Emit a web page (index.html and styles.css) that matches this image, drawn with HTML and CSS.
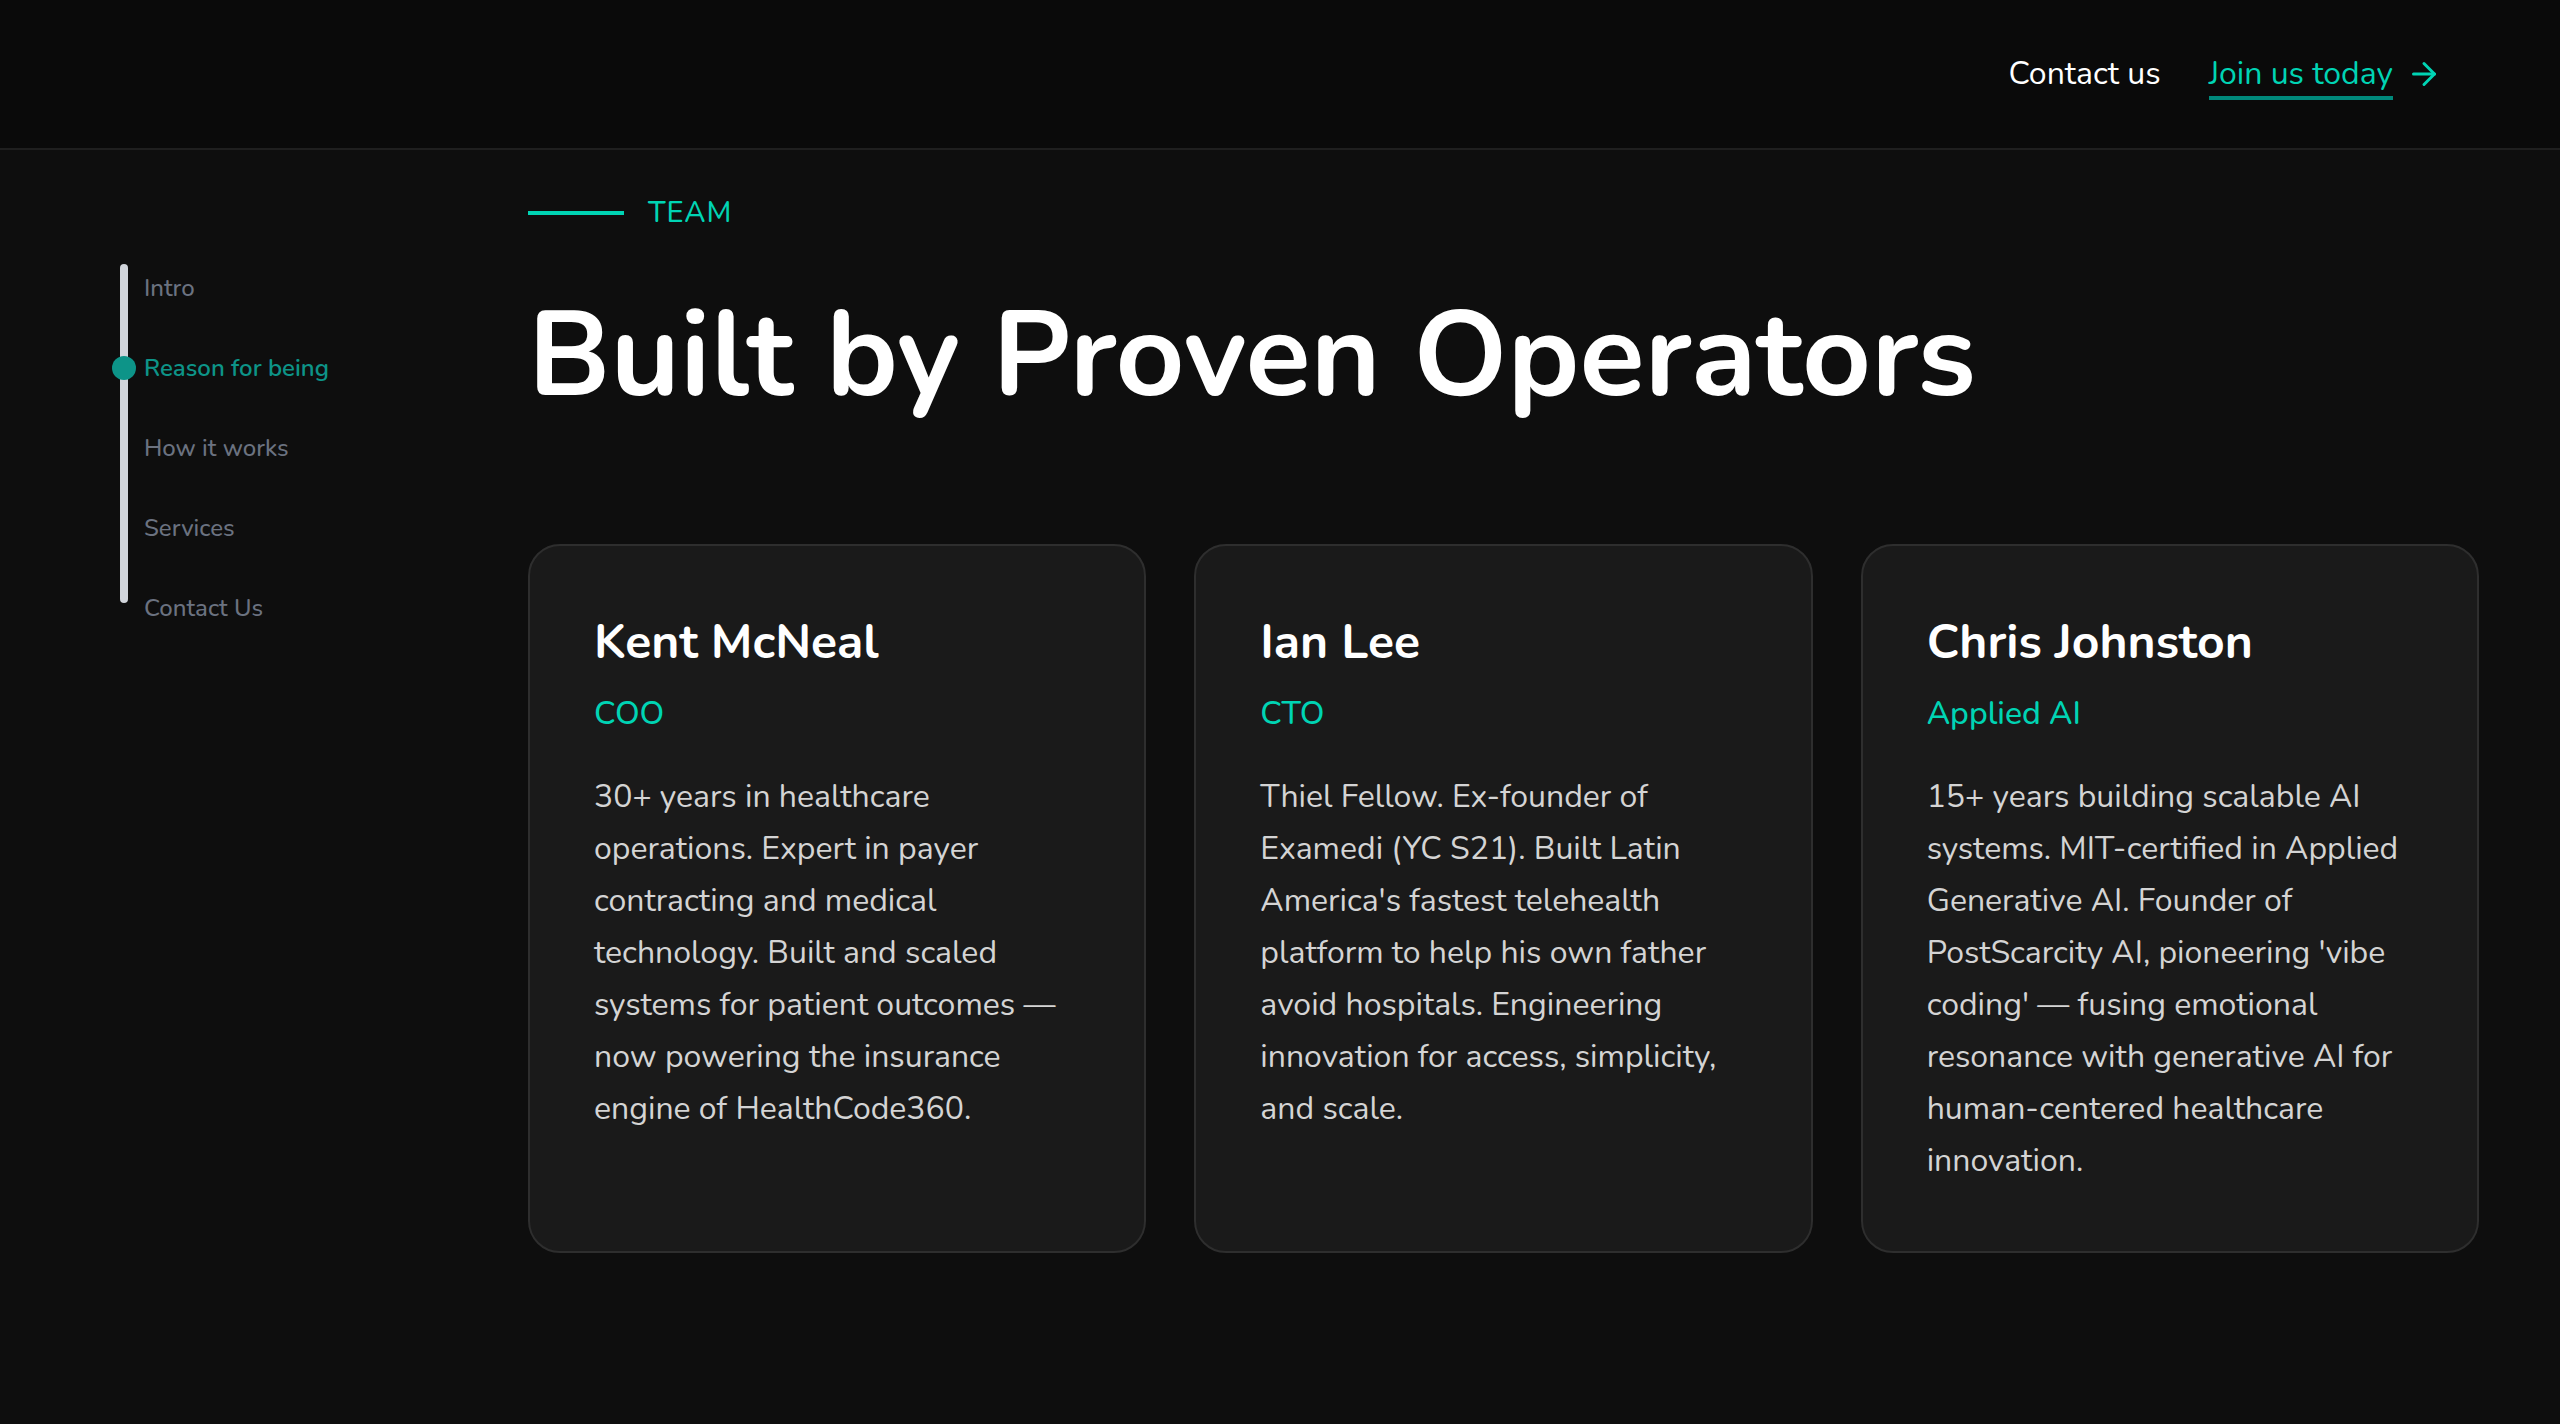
FILE: index.html
```html
<!DOCTYPE html>
<html lang="en">
<head>
<meta charset="utf-8">
<title>Team — Built by Proven Operators</title>
<link rel="stylesheet" href="styles.css">
</head>
<body>
<header class="topbar">
  <nav class="topnav">
    <a class="topnav-link" href="#contact">Contact us</a>
    <a class="topnav-cta" href="#join">
      <span class="topnav-cta-text">Join us today</span>
      <svg class="topnav-arrow" viewBox="0 0 24 24" width="36" height="36" fill="none" stroke="currentColor" stroke-width="2" stroke-linecap="round" stroke-linejoin="round" aria-hidden="true"><path d="M5 12h14"/><path d="M12 5l7 7-7 7"/></svg>
    </a>
  </nav>
</header>
<div class="layout">
  <aside class="sidenav">
    <div class="sidenav-track"><span class="sidenav-dot"></span></div>
    <ul class="sidenav-list">
      <li class="sidenav-item">Intro</li>
      <li class="sidenav-item is-active">Reason for being</li>
      <li class="sidenav-item">How it works</li>
      <li class="sidenav-item">Services</li>
      <li class="sidenav-item">Contact Us</li>
    </ul>
  </aside>
  <main class="content">
    <div class="eyebrow"><span class="eyebrow-line"></span><span class="eyebrow-text">TEAM</span></div>
    <h1 class="headline">Built by Proven Operators</h1>
    <div class="cards">
      <article class="card">
        <h2 class="card-name">Kent McNeal</h2>
        <p class="card-role">COO</p>
        <p class="card-bio">30+ years in healthcare operations. Expert in payer contracting and medical technology. Built and scaled systems for patient outcomes — now powering the insurance engine of HealthCode360.</p>
      </article>
      <article class="card">
        <h2 class="card-name">Ian Lee</h2>
        <p class="card-role">CTO</p>
        <p class="card-bio">Thiel Fellow. Ex-founder of Examedi (YC S21). Built Latin America's fastest telehealth platform to help his own father avoid hospitals. Engineering innovation for access, simplicity, and scale.</p>
      </article>
      <article class="card">
        <h2 class="card-name">Chris Johnston</h2>
        <p class="card-role">Applied AI</p>
        <p class="card-bio">15+ years building scalable AI systems. MIT-certified in Applied Generative AI. Founder of PostScarcity AI, pioneering 'vibe coding' — fusing emotional resonance with generative AI for human-centered healthcare innovation.</p>
      </article>
    </div>
  </main>
</div>
</body>
</html>
```
FILE: styles.css
```css
* { box-sizing: border-box; }
html, body { margin: 0; padding: 0; }
body {
  background: #0e0e0e;
  color: #ffffff;
  font-family: "Nunito", "Lato", "Noto Sans", sans-serif;
  min-height: 1424px;
}
a { text-decoration: none; color: inherit; }

.topbar {
  height: 150px;
  background: #0a0a0a;
  border-bottom: 2px solid #1f1f1f;
  display: flex;
  align-items: center;
  justify-content: flex-end;
  padding: 6px 118px 0 0;
}
.topnav {
  display: flex;
  align-items: center;
  gap: 48px;
}
.topnav-link {
  font-size: 32px;
  line-height: 40px;
  color: #ffffff;
  padding-bottom: 2px;
  border-bottom: 4px solid transparent;
}
.topnav-cta {
  display: flex;
  align-items: flex-start;
  gap: 13px;
  color: #00d4b4;
}
.topnav-cta-text {
  font-size: 32px;
  line-height: 40px;
  padding-bottom: 2px;
  border-bottom: 4px solid #00897b;
}
.topnav-arrow { display: block; margin-top: 2px; }

.layout {
  display: flex;
}
.sidenav {
  width: 528px;
  flex: none;
  padding: 114px 0 0 120px;
  display: flex;
  align-items: flex-start;
}
.sidenav-track {
  position: relative;
  width: 8px;
  height: 339px;
  border-radius: 4px;
  background: #d1d5db;
  flex: none;
}
.sidenav-dot {
  position: absolute;
  left: -8px;
  top: 92px;
  width: 24px;
  height: 24px;
  border-radius: 50%;
  background: #0d9488;
}
.sidenav-list {
  list-style: none;
  margin: 4px 0 0 16px;
  padding: 0;
  display: flex;
  flex-direction: column;
  gap: 40px;
}
.sidenav-item {
  font-size: 24px;
  line-height: 40px;
  font-weight: 500;
  color: #6b7280;
}
.sidenav-item.is-active {
  color: #0d9488;
  font-weight: 600;
}

.content {
  width: 1951px;
  flex: none;
  padding-top: 45px;
}
.eyebrow {
  display: flex;
  align-items: center;
  gap: 24px;
  height: 36px;
}
.eyebrow-line {
  width: 96px;
  height: 4px;
  background: #00d4b4;
}
.eyebrow-text {
  font-size: 29px;
  line-height: 36px;
  letter-spacing: 1px;
  font-weight: 500;
  color: #00d4b4;
}
.headline {
  margin: 58px 0 0;
  font-size: 120px;
  line-height: 133px;
  font-weight: 700;
  color: #ffffff;
}
.cards {
  margin-top: 122px;
  display: grid;
  grid-template-columns: repeat(3, 1fr);
  gap: 48px;
}
.card {
  background: #1a1a1a;
  border: 2px solid #2e2e2e;
  border-radius: 32px;
  padding: 64px;
}
.card-name {
  margin: 2px 0 0;
  font-size: 48px;
  line-height: 60px;
  font-weight: 700;
  color: #ffffff;
}
.card-role {
  margin: 20px 0 0;
  font-size: 32px;
  line-height: 44px;
  font-weight: 500;
  color: #00d4b4;
}
.card-bio {
  margin: 35px 0 0;
  font-size: 32px;
  line-height: 52px;
  color: #d4d4d4;
}
```
